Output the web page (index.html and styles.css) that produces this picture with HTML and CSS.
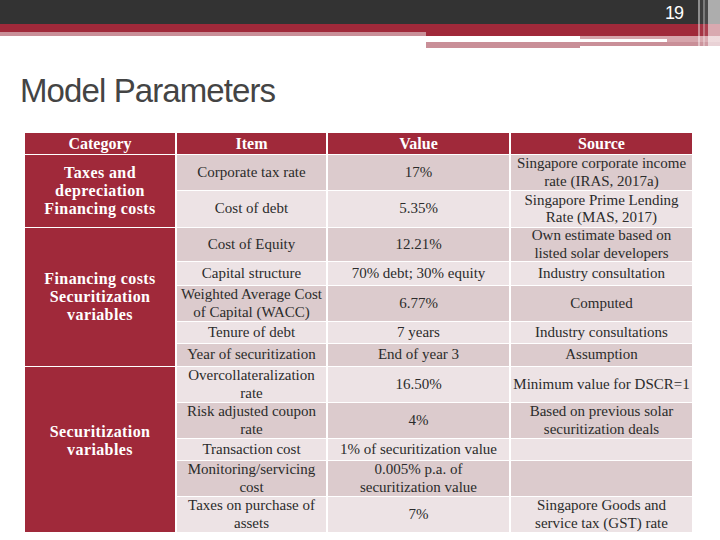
FILE: index.html
```html
<!DOCTYPE html>
<html>
<head>
<meta charset="utf-8">
<link rel="stylesheet" href="styles.css">
</head>
<body>
<div class="slide">
  <header class="topbar">
    <span class="pagenum">19</span>
    <div class="edge"></div>
  </header>
  <div class="deco">
    <div class="deco-left">
      <div class="red b8"></div>
      <div class="pink b4"></div>
    </div>
    <div class="deco-right">
      <div class="red b12"></div>
      <div class="strip b3"><div class="white w154"></div><div class="lpink grow"></div></div>
      <div class="strip b3"><div class="white w241"></div><div class="lpink grow"></div></div>
      <div class="pink b4"></div>
      <div class="strip b2"><div class="pink w154"></div><div class="white grow"></div></div>
    </div>
  </div>
  <h1 class="title">Model Parameters</h1>
  <div class="grid">
    <div class="c h">Category</div>
    <div class="c h">Item</div>
    <div class="c h">Value</div>
    <div class="c h">Source</div>

    <div class="c cat span2">Taxes and<br>depreciation<br>Financing costs</div>
    <div class="c d">Corporate tax rate</div>
    <div class="c d">17%</div>
    <div class="c d">Singapore corporate income<br>rate (IRAS, 2017a)</div>

    <div class="c l">Cost of debt</div>
    <div class="c l">5.35%</div>
    <div class="c l">Singapore Prime Lending<br>Rate (MAS, 2017)</div>

    <div class="c cat span5">Financing costs<br>Securitization<br>variables</div>
    <div class="c d">Cost of Equity</div>
    <div class="c d">12.21%</div>
    <div class="c d">Own estimate based on<br>listed solar developers</div>

    <div class="c l">Capital structure</div>
    <div class="c l">70% debt; 30% equity</div>
    <div class="c l">Industry consultation</div>

    <div class="c d">Weighted Average Cost<br>of Capital (WACC)</div>
    <div class="c d">6.77%</div>
    <div class="c d">Computed</div>

    <div class="c l">Tenure of debt</div>
    <div class="c l">7 years</div>
    <div class="c l">Industry consultations</div>

    <div class="c d">Year of securitization</div>
    <div class="c d">End of year 3</div>
    <div class="c d">Assumption</div>

    <div class="c cat span5 lift">Securitization<br>variables</div>
    <div class="c l">Overcollateralization<br>rate</div>
    <div class="c l">16.50%</div>
    <div class="c l">Minimum value for DSCR=1</div>

    <div class="c d">Risk adjusted coupon<br>rate</div>
    <div class="c d">4%</div>
    <div class="c d">Based on previous solar<br>securitization deals</div>

    <div class="c l">Transaction cost</div>
    <div class="c l">1% of securitization value</div>
    <div class="c l"></div>

    <div class="c d">Monitoring/servicing<br>cost</div>
    <div class="c d">0.005% p.a. of<br>securitization value</div>
    <div class="c d"></div>

    <div class="c l">Taxes on purchase of<br>assets</div>
    <div class="c l">7%</div>
    <div class="c l">Singapore Goods and<br>service tax (GST) rate</div>
  </div>
</div>
</body>
</html>
```
FILE: styles.css
```css
html, body {
  margin: 0;
  padding: 0;
  background: #ffffff;
}
.slide {
  width: 720px;
  height: 540px;
  overflow: hidden;
  position: relative;
  background: #ffffff;
}
.topbar {
  height: 24px;
  background: #333333;
  display: flex;
  justify-content: flex-end;
  align-items: center;
  padding-right: 37px;
  position: relative;
}
.pagenum {
  font-family: "Liberation Sans", Arial, sans-serif;
  font-size: 18px;
  color: #ffffff;
  letter-spacing: -1px;
  line-height: 24px;
  margin-top: 2px;
}
.edge {
  position: absolute;
  right: 0;
  top: 0;
  width: 22px;
  height: 48px;
  background:
    linear-gradient(90deg,
      rgba(255,255,255,0.45) 0px, rgba(255,255,255,0.45) 2px,
      rgba(255,255,255,0.05) 2px, rgba(255,255,255,0.05) 5px,
      rgba(255,255,255,0.35) 5px, rgba(255,255,255,0.35) 7px,
      rgba(255,255,255,0.10) 7px, rgba(255,255,255,0.10) 10px,
      rgba(255,255,255,0.60) 10px, rgba(255,255,255,0.60) 22px);
}
.deco {
  display: flex;
  height: 24px;
}
.deco-left {
  width: 426px;
  display: flex;
  flex-direction: column;
}
.deco-right {
  flex: 1;
  display: flex;
  flex-direction: column;
}
.strip { display: flex; }
.red { background: #a0293a; }
.pink { background: #c98f98; }
.lpink { background: #d6a4ab; }
.white { background: #ffffff; }
.b2 { height: 2px; }
.b3 { height: 3px; }
.b4 { height: 4px; }
.b8 { height: 8px; }
.b12 { height: 12px; }
.w154 { width: 154px; }
.w241 { width: 241px; }
.grow { flex: 1; }

.title {
  margin: 23px 0 22px 20px;
  font-family: "Liberation Sans", Arial, sans-serif;
  font-weight: normal;
  font-size: 33px;
  line-height: 40px;
  letter-spacing: -0.9px;
  color: #444444;
}
.grid {
  margin-left: 25px;
  display: grid;
  grid-template-columns: 150px 149px 181px 181px;
  grid-template-rows: 21px 35px 36px 33px 23px 35px 21px 22px 35px 35px 21px 35px 35px;
  column-gap: 2px;
  row-gap: 1px;
}
.c {
  display: flex;
  align-items: center;
  justify-content: center;
  text-align: center;
  font-family: "Liberation Serif", "Times New Roman", serif;
  font-size: 15px;
  line-height: 17.5px;
  color: #2b2b2b;
}
.d { background: #dccbcd; }
.l { background: #ede3e5; }
.h, .cat {
  background: #a0293a;
  color: #ffffff;
  font-weight: bold;
  font-size: 16px;
  line-height: 18px;
}
.cat { letter-spacing: 0.4px; }
.span2 { grid-row: span 2; }
.span5 { grid-row: span 5; }
.lift { padding-bottom: 18px; }
```
